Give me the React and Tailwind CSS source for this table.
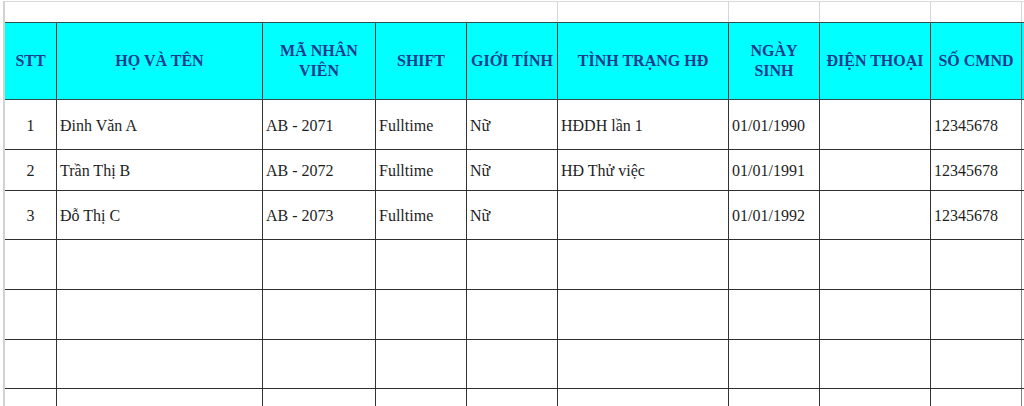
import React from "react"

const cols = "grid-cols-[52px_206px_113px_91px_91px_171px_91px_111px_91px_1fr]"

const headers = [
  ["STT"],
  ["HỌ VÀ TÊN"],
  ["MÃ NHÂN", "VIÊN"],
  ["SHIFT"],
  ["GIỚI TÍNH"],
  ["TÌNH TRẠNG HĐ"],
  ["NGÀY", "SINH"],
  ["ĐIỆN THOẠI"],
  ["SỐ CMND"],
  [""],
]

const rows = [
  { h: "h-[50px]", cells: ["1", "Đinh Văn A", "AB - 2071", "Fulltime", "Nữ", "HĐDH lần 1", "01/01/1990", "", "12345678", ""] },
  { h: "h-[41px]", cells: ["2", "Trần Thị B", "AB - 2072", "Fulltime", "Nữ", "HĐ Thử việc", "01/01/1991", "", "12345678", ""] },
  { h: "h-[49px]", cells: ["3", "Đỗ Thị C", "AB - 2073", "Fulltime", "Nữ", "", "01/01/1992", "", "12345678", ""] },
  { h: "h-[50px]", cells: Array(10).fill("") },
  { h: "h-[50px]", cells: Array(10).fill("") },
  { h: "h-[49px]", cells: Array(10).fill("") },
  { h: "h-[50px]", cells: Array(10).fill("") },
]

export default function App() {
  return (
    <div
      className="w-[1024px] h-[406px] overflow-hidden bg-white pl-[3px] pt-px"
      style={{ fontFamily: '"Liberation Serif", "Times New Roman", serif' }}
    >
      <div className="border-l-2 border-[#d2d2d2] h-full">
        {/* gridline strip above the header */}
        <div className={`grid ${cols} h-[21px] border-t border-[#dadada]`}>
          <div className="col-span-5 border-r border-[#d6d6d6]" />
          <div className="border-r border-[#d6d6d6]" />
          <div className="border-r border-[#d6d6d6]" />
          <div className="border-r border-[#d6d6d6]" />
          <div className="border-r border-[#d6d6d6]" />
          <div />
        </div>

        {/* Header */}
        <div className={`grid ${cols} h-[78px] border-t border-b border-[#2f4f4f] bg-[#00ffff]`}>
          {headers.map((lines, i) => (
            <div
              key={i}
              className={`flex flex-col items-center justify-center text-center text-[16px] font-bold leading-[20px] text-[#1c3a8e] whitespace-nowrap ${
                i < 9 ? "border-r border-[#333]" : ""
              } ${i === 8 ? "border-[#777]" : ""}`}
            >
              {lines.map((l, j) => (
                <span key={j}>{l}</span>
              ))}
            </div>
          ))}
        </div>

        {/* Body rows */}
        {rows.map((r, ri) => (
          <div key={ri} className={`grid ${cols} ${r.h} border-b border-[#2e2e2e]`}>
            {r.cells.map((c, ci) => (
              <div
                key={ci}
                className={`flex items-center pt-0.5 text-[16px] text-[#1e1e1e] whitespace-nowrap ${
                  ci === 0 ? "justify-center" : "pl-[3px]"
                } ${ci < 9 ? "border-r border-[#333]" : ""} ${ci === 8 ? "border-[#808080]" : ""}`}
              >
                {c}
              </div>
            ))}
          </div>
        ))}
      </div>
    </div>
  )
}
